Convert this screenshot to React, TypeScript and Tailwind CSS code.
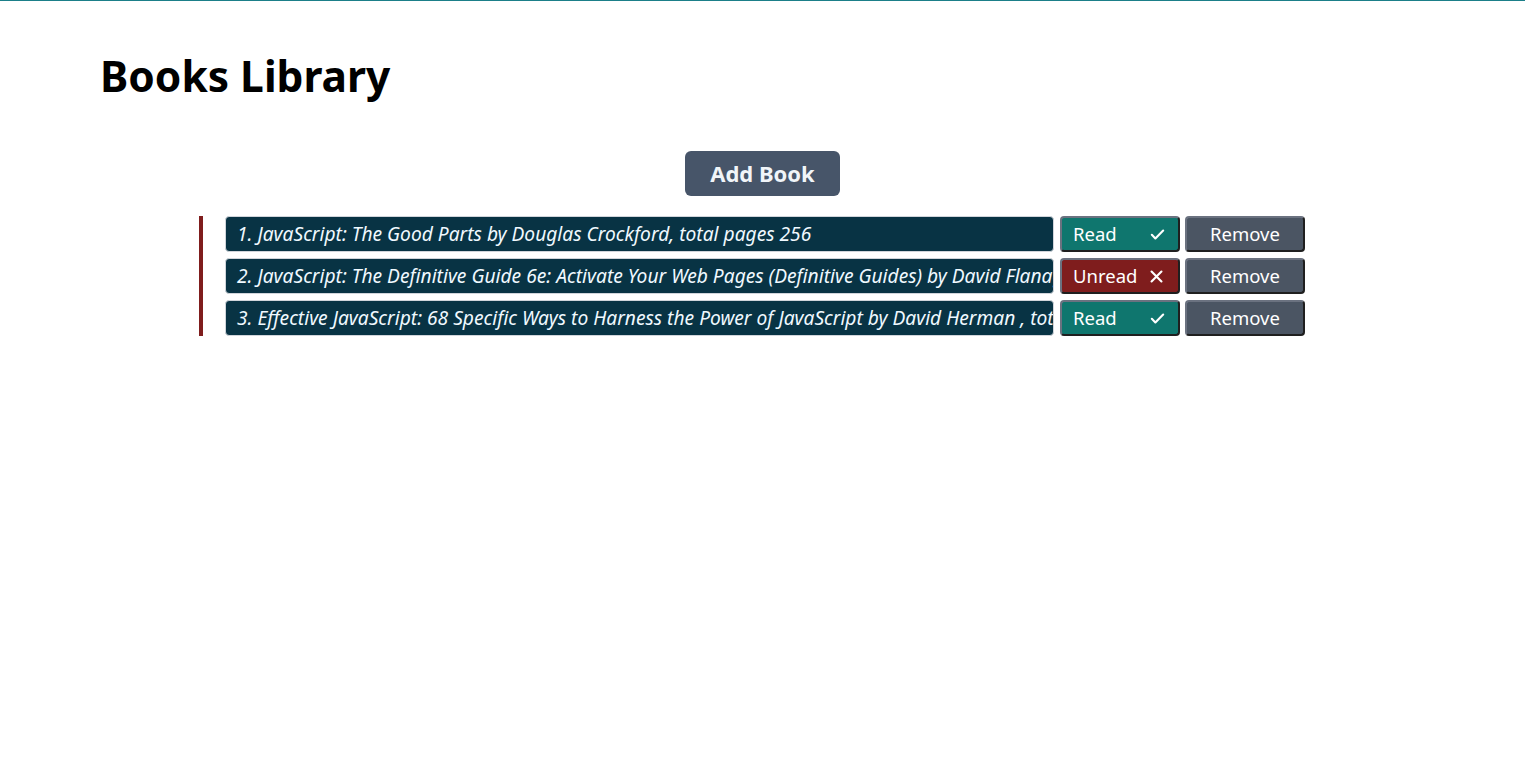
import React from "react";

const books = [
  { t: "1. JavaScript: The Good Parts by Douglas Crockford, total pages 256", read: true },
  { t: "2. JavaScript: The Definitive Guide 6e: Activate Your Web Pages (Definitive Guides) by David Flanagan, total pages 1096", read: false },
  { t: "3. Effective JavaScript: 68 Specific Ways to Harness the Power of JavaScript by David Herman , total pages 240", read: true },
];

function Check() {
  return (
    <svg width="17" height="17" viewBox="0 0 24 24" fill="none" stroke="currentColor" strokeWidth="3" strokeLinecap="round" strokeLinejoin="round">
      <path d="M4 12.5l5 5L20 6.5" />
    </svg>
  );
}

function Cross() {
  return (
    <svg width="17" height="17" viewBox="0 0 24 24" fill="none" stroke="currentColor" strokeWidth="3" strokeLinecap="round">
      <path d="M5 5l14 14M19 5L5 19" />
    </svg>
  );
}

const btn =
  "h-[36px] w-[120px] rounded-[4px] border-2 border-t-[#6b7280] border-l-[#6b7280] border-b-[#1f1f1f] border-r-[#1f1f1f] text-white text-[18.5px] flex items-center";

export default function App() {
  return (
    <div className="min-h-screen bg-white border-t border-[#1b7f89] font-['Noto_Sans',sans-serif] text-black">
      <h1 className="pl-[100px] pt-[45px] text-[42.5px] leading-[60px] font-bold">Books Library</h1>
      <div className="flex justify-center mt-[45px]">
        <button className="w-[155px] h-[45px] rounded-md bg-[#475569] text-[#f1f5f9] text-[22px] font-bold">Add Book</button>
      </div>
      <ul className="ml-[199px] mt-[20px] border-l-4 border-[#7f1d1d] pl-[22px] flex flex-col gap-[6px] w-fit">
        {books.map((b, i) => (
          <li key={i} className="flex items-center h-[36px]">
            <div className="w-[829px] h-[36px] rounded-[4px] border border-[#d1d5db] bg-[#083344] text-[#f0f9ff] italic text-[19.2px] pl-[11px] flex items-center whitespace-nowrap overflow-hidden">
              {b.t}
            </div>
            {b.read ? (
              <button className={`${btn} ml-[6px] bg-[#0f766e] justify-between pl-[11px] pr-[12px]`}>
                <span>Read</span>
                <Check />
              </button>
            ) : (
              <button className={`${btn} ml-[6px] bg-[#7f1d1d] justify-between pl-[11px] pr-[13px]`}>
                <span>Unread</span>
                <Cross />
              </button>
            )}
            <button className={`${btn} ml-[5px] bg-[#4b5563] justify-center`}>Remove</button>
          </li>
        ))}
      </ul>
    </div>
  );
}
